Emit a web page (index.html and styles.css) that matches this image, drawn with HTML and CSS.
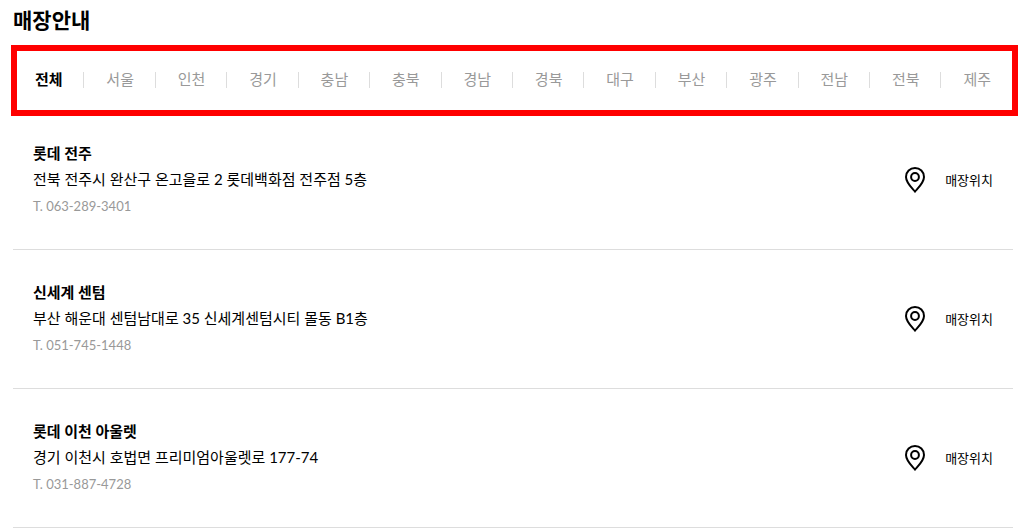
FILE: index.html
```html
<!DOCTYPE html>
<html lang="ko">
<head>
<meta charset="utf-8">
<meta name="viewport" content="width=device-width, initial-scale=1">
<title>매장안내</title>
<link rel="stylesheet" href="styles.css">
</head>
<body>
<svg class="sprite" aria-hidden="true">
  <symbol id="pin" viewBox="0 0 22 28">
    <path d="M11 2C6 2 2 5.900 2 10.900C2 16.500 7 21 11 25.500C15 21 20 16.500 20 10.900C20 5.900 16 2 11 2Z" fill="none" stroke="currentColor" stroke-width="2"/>
    <circle cx="11" cy="11" r="3.900" fill="none" stroke="currentColor" stroke-width="2"/>
  </symbol>
</svg>
<main class="page">
  <h1 class="title">매장안내</h1>
  <nav class="regions" aria-label="지역">
    <ul class="region-list">
      <li class="region"><a class="region-link current" href="#" aria-current="true">전체</a></li>
      <li class="region"><a class="region-link" href="#">서울</a></li>
      <li class="region"><a class="region-link" href="#">인천</a></li>
      <li class="region"><a class="region-link" href="#">경기</a></li>
      <li class="region"><a class="region-link" href="#">충남</a></li>
      <li class="region"><a class="region-link" href="#">충북</a></li>
      <li class="region"><a class="region-link" href="#">경남</a></li>
      <li class="region"><a class="region-link" href="#">경북</a></li>
      <li class="region"><a class="region-link" href="#">대구</a></li>
      <li class="region"><a class="region-link" href="#">부산</a></li>
      <li class="region"><a class="region-link" href="#">광주</a></li>
      <li class="region"><a class="region-link" href="#">전남</a></li>
      <li class="region"><a class="region-link" href="#">전북</a></li>
      <li class="region"><a class="region-link" href="#">제주</a></li>
    </ul>
  </nav>
  <ul class="stores">
    <li class="store">
      <div class="info">
        <h2 class="name">롯데 전주</h2>
        <p class="address">전북 전주시 완산구 온고을로 2 롯데백화점 전주점 5층</p>
        <p class="phone">T. 063-289-3401</p>
      </div>
      <a class="location" href="#"><svg class="pin" aria-hidden="true"><use href="#pin"/></svg>매장위치</a>
    </li>
    <li class="store">
      <div class="info">
        <h2 class="name">신세계 센텀</h2>
        <p class="address">부산 해운대 센텀남대로 35 신세계센텀시티 몰동 B1층</p>
        <p class="phone">T. 051-745-1448</p>
      </div>
      <a class="location" href="#"><svg class="pin" aria-hidden="true"><use href="#pin"/></svg>매장위치</a>
    </li>
    <li class="store">
      <div class="info">
        <h2 class="name">롯데 이천 아울렛</h2>
        <p class="address">경기 이천시 호법면 프리미엄아울렛로 177-74</p>
        <p class="phone">T. 031-887-4728</p>
      </div>
      <a class="location" href="#"><svg class="pin" aria-hidden="true"><use href="#pin"/></svg>매장위치</a>
    </li>
  </ul>
</main>
</body>
</html>
```
FILE: styles.css
```css
* {
  box-sizing: border-box;
}

body {
  margin: 0;
  background: #fff;
  color: #000;
  font-family: Lato, "Noto Sans CJK KR", sans-serif;
  font-size: 15px;
  line-height: 26px;
}

ul,
h1,
h2,
p {
  margin: 0;
  padding: 0;
  list-style: none;
}

a {
  color: inherit;
  text-decoration: none;
}

.sprite {
  display: none;
}

.page {
  padding: 5px 2px 0 11px;
}

.title {
  padding-left: 2px;
  font-size: 21px;
  font-weight: 700;
  line-height: 30px;
}

.regions {
  margin-top: 10px;
  padding: 16px 0 17px;
  border: 6px solid #f00;
}

.region-list {
  display: flex;
  margin: 0 0 0 -5px;
}

.region {
  display: flex;
  flex: 1;
  align-items: center;
  justify-content: center;
}

.region + .region {
  background: linear-gradient(#ddd, #ddd) left center / 1px 16px no-repeat;
}

.region-link {
  padding: 0 0 2px 2px;
  color: #999;
  line-height: 24px;
}

.region-link.current {
  color: #000;
  font-weight: 700;
}

.stores {
  margin: -5px 5px 0 2px;
}

.store {
  display: flex;
  align-items: center;
  justify-content: space-between;
  padding: 30px 20px;
  border-bottom: 1px solid #ddd;
}

.name {
  font-size: 15px;
  font-weight: 700;
  line-height: 24px;
}

.address {
  line-height: 28px;
}

.phone {
  color: #999;
  font-size: 13px;
}

.location {
  display: flex;
  align-items: center;
  gap: 19px;
  font-size: 13px;
}

.pin {
  width: 22px;
  height: 28px;
}
```
